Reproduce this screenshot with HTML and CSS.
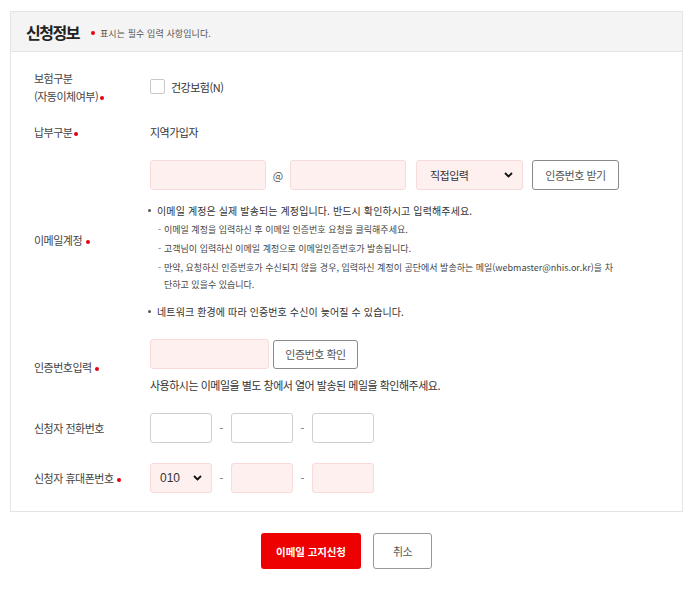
FILE: index.html
```html
<!DOCTYPE html>
<html lang="ko">
<head>
<meta charset="utf-8">
<title>신청정보</title>
<link rel="stylesheet" href="styles.css">
</head>
<body>
<section class="panel">
  <header class="panel-head">
    <h2 class="title">신청정보</h2>
    <p class="note"><span class="dot"></span>표시는 필수 입력 사항입니다.</p>
  </header>
  <div class="panel-body">
    <div class="row row-ins">
      <div class="label">보험구분<br>(자동이체여부)<span class="dot tight"></span></div>
      <div class="field">
        <label class="check"><span class="box"></span>건강보험(N)</label>
      </div>
    </div>
    <div class="row row-pay">
      <div class="label">납부구분<span class="dot tight"></span></div>
      <div class="field">지역가입자</div>
    </div>
    <div class="row row-mail">
      <div class="label">이메일계정 <span class="dot"></span></div>
      <div class="field">
        <div class="inline">
          <input class="inp req w116" type="text">
          <span class="at">@</span>
          <input class="inp req w116" type="text">
          <div class="sel-wrap w107">
            <select class="inp req sel"><option>직접입력</option></select>
            <svg class="chev" width="9" height="6" viewBox="0 0 9 6"><path d="M1 1 L4.5 4.5 L8 1" fill="none" stroke="#111" stroke-width="1.8"/></svg>
          </div>
          <button class="btn-line w87" type="button">인증번호 받기</button>
        </div>
        <ul class="bullets">
          <li>이메일 계정은 실제 발송되는 계정입니다. 반드시 확인하시고 입력해주세요.
            <ul class="subs">
              <li>이메일 계정을 입력하신 후 이메일 인증번호 요청을 클릭해주세요.</li>
              <li>고객님이 입력하신 이메일 계정으로 이메일인증번호가 발송됩니다.</li>
              <li>만약, 요청하신 인증번호가 수신되지 않을 경우, 입력하신 계정이 공단에서 발송하는 메일(webmaster@nhis.or.kr)을 차단하고 있을수 있습니다.</li>
            </ul>
          </li>
          <li class="last">네트워크 환경에 따라 인증번호 수신이 늦어질 수 있습니다.</li>
        </ul>
      </div>
    </div>
    <div class="row row-auth">
      <div class="label">인증번호입력 <span class="dot"></span></div>
      <div class="field">
        <div class="inline gap4">
          <input class="inp req w119" type="text">
          <button class="btn-line w85" type="button">인증번호 확인</button>
        </div>
        <p class="help">사용하시는 이메일을 별도 창에서 열어 발송된 메일을 확인해주세요.</p>
      </div>
    </div>
    <div class="row row-tel">
      <div class="label">신청자 전화번호</div>
      <div class="field inline">
        <input class="inp w62" type="text">
        <span class="dash">-</span>
        <input class="inp w62" type="text">
        <span class="dash">-</span>
        <input class="inp w62" type="text">
      </div>
    </div>
    <div class="row row-mob">
      <div class="label">신청자 휴대폰번호 <span class="dot"></span></div>
      <div class="field inline">
        <div class="sel-wrap w62">
          <select class="inp req sel num"><option>010</option></select>
          <svg class="chev" width="9" height="6" viewBox="0 0 9 6"><path d="M1 1 L4.5 4.5 L8 1" fill="none" stroke="#111" stroke-width="1.8"/></svg>
        </div>
        <span class="dash">-</span>
        <input class="inp req w62" type="text">
        <span class="dash">-</span>
        <input class="inp req w62" type="text">
      </div>
    </div>
  </div>
</section>
<div class="actions">
  <button class="btn-red" type="button">이메일 고지신청</button>
  <button class="btn-cancel" type="button">취소</button>
</div>
</body>
</html>
```

FILE: styles.css
```css
* { box-sizing: border-box; }
html, body { margin: 0; padding: 0; background: #fff; }
body {
  padding: 11px 12px 0 10px;
  font-family: "Noto Sans CJK KR", "Noto Sans", sans-serif;
  color: #333;
  font-size: 11px;
  letter-spacing: -0.5px;
}
.panel {
  border: 1px solid #e4e4e4;
  width: 673px;
}
.panel-head {
  height: 40px;
  background: #f4f4f4;
  border-bottom: 1px solid #e4e4e4;
  display: flex;
  align-items: center;
  padding-left: 15px;
}
.title {
  margin: 0;
  font-size: 16px;
  font-weight: 700;
  letter-spacing: -1.5px;
  color: #222;
  line-height: 20px;
}
.note {
  margin: 3px 0 0 12px;
  font-size: 9px;
  color: #555;
  letter-spacing: 0.1px;
  display: flex;
  align-items: center;
}
.dot {
  display: inline-block;
  width: 4px;
  height: 4px;
  border-radius: 50%;
  background: #e60012;
  vertical-align: middle;
  margin-left: 1px;
}
.note .dot { margin: 0 5px 0 0; }
.dot.tight { margin-left: 2px; }
.panel-body {
  padding: 17px 0 18px 23px;
  display: flex;
  flex-direction: column;
}
.row {
  display: grid;
  grid-template-columns: 116px 1fr;
  align-items: center;
}
.label { line-height: 18px; color: #444; }
.field { line-height: 18px; }
.row-pay { margin-top: 18px; }
.row-mail { margin-top: 19px; }
.row-auth { margin-top: 19px; }
.row-tel { margin-top: 19px; }
.row-mob { margin-top: 20px; }

.check { display: flex; align-items: center; gap: 6px; }
.box {
  width: 15px; height: 15px;
  border: 1px solid #c8c8c8;
  border-radius: 2px;
  background: #fff;
  margin-top: -1px;
}
.inline { display: flex; align-items: center; }
.gap4 { gap: 4px; }
.inp {
  height: 30px;
  border: 1px solid #cfcfcf;
  border-radius: 3px;
  background: #fff;
  margin: 0;
  padding: 0 10px;
  font-family: inherit;
  font-size: 11px;
  letter-spacing: -0.5px;
  color: #333;
}
.inp.req { background: #fff0f0; border-color: #f7dada; }
.w116 { width: 116px; }
.w107 { width: 107px; }
.w119 { width: 119px; }
.w62 { width: 62px; }
.at { width: 24px; text-align: center; color: #555; font-size: 11px; letter-spacing: 0; }
.dash { width: 19px; text-align: center; color: #666; letter-spacing: 0; }
.sel-wrap { position: relative; height: 30px; margin-left: 10px; }
.row-mob .sel-wrap { margin-left: 0; }
.sel {
  width: 100%;
  appearance: none;
  -webkit-appearance: none;
  padding-left: 13px;
}
.sel.num { padding-left: 9px; font-family: "Liberation Sans", Arial, sans-serif; font-size: 12px; letter-spacing: 0; }
.chev { position: absolute; right: 10px; top: 12px; pointer-events: none; }
.btn-line {
  height: 30px;
  border: 1px solid #8a8a8a;
  border-radius: 3px;
  background: #fff;
  color: #555;
  font-family: inherit;
  font-size: 11px;
  letter-spacing: -0.5px;
  padding: 0;
  margin: 0;
}
.w87 { width: 87px; margin-left: 9px; }
.w85 { width: 85px; height: 29px; }
.bullets {
  list-style: none;
  margin: 12px 0 0 0;
  padding: 0 0 0 7px;
  font-size: 10px;
  letter-spacing: 0.12px;
  line-height: 17px;
  color: #333;
}
.bullets > li { position: relative; }
.bullets > li::before {
  content: "";
  position: absolute;
  left: -9px;
  top: 7px;
  width: 3px;
  height: 3px;
  border-radius: 50%;
  background: #555;
}
.bullets > li.last { margin-top: 10px; }
.subs {
  list-style: none;
  margin: 0;
  padding: 0 0 0 7px;
  font-size: 9px;
  letter-spacing: 0;
  width: 462px;
  color: #444;
}
.subs li { margin-top: 2px; position: relative; }
.subs li::before {
  content: "-";
  position: absolute;
  left: -6px;
  top: 0;
  color: #666;
}
.help { margin: 7px 0 0; line-height: 18px; }
.actions {
  display: flex;
  gap: 12px;
  margin-top: 21px;
  width: 673px;
  padding-left: 251px;
}
.btn-red {
  width: 100px; height: 36px;
  background: #ee0000;
  border: 0;
  border-radius: 3px;
  color: #fff;
  font-family: inherit;
  font-weight: 700;
  font-size: 10.5px;
  letter-spacing: -0.1px;
}
.btn-cancel {
  width: 59px; height: 36px;
  background: #fff;
  border: 1px solid #999;
  border-radius: 3px;
  color: #555;
  font-family: inherit;
  font-size: 11px;
  letter-spacing: -0.5px;
}
```
